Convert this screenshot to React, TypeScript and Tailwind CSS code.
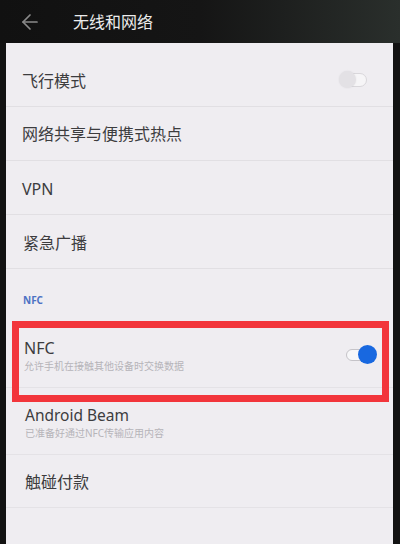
import React from "react";
import { ArrowLeft } from "lucide-react";

const font = { fontFamily: '"Noto Sans", "Noto Sans CJK SC", sans-serif' };

function ToggleOff() {
  return (
    <div className="relative w-[30px] h-[20px] flex items-center">
      <div className="absolute left-[6px] w-[22px] h-[14px] rounded-full border border-[#d9d7db] bg-[#f6f5f7]" />
      <div className="absolute left-0 w-[17px] h-[17px] rounded-full bg-[#e3e1e5] shadow-[0_0_2px_rgba(0,0,0,0.08)]" />
    </div>
  );
}

function ToggleOn() {
  return (
    <div className="relative w-[31px] h-[20px] flex items-center">
      <div className="absolute left-0 top-[5px] w-[26px] h-[12px] rounded-full border-[1.5px] border-[#c5c3c8] bg-[#f7f7f9]" />
      <div className="absolute right-0 w-[19px] h-[19px] rounded-full bg-[#1868e0]" />
    </div>
  );
}

export default function App() {
  return (
    <div className="w-[400px] h-[544px] overflow-hidden flex flex-col bg-[#121212] relative" style={font}>
      <div className="h-[43px] shrink-0 flex items-center bg-linear-to-r from-[#111111] via-[#151515] to-[#2a2f2c]">
        <div className="w-[73px] pl-[18px] flex items-center">
          <ArrowLeft size={24} strokeWidth={1.7} color="#8a8a8a" />
        </div>
        <span className="text-[16px] text-[#ececec] leading-none">无线和网络</span>
      </div>
      <div className="flex-1 ml-[6px] mr-[7px] bg-[#efedf1] pt-[10px] text-[#3c3c3e]">
        <div className="h-[54px] flex items-center justify-between pl-[16px] pr-[24px] border-b border-[#e1dfe3]">
          <span className="text-[16px] mt-[2px]">飞行模式</span>
          <ToggleOff />
        </div>
        <div className="h-[54px] flex items-center pl-[16px] border-b border-[#e1dfe3]">
          <span className="text-[16px]">网络共享与便携式热点</span>
        </div>
        <div className="h-[54px] flex items-center pl-[16px] border-b border-[#e1dfe3]">
          <span className="text-[16px] mt-[2px]">VPN</span>
        </div>
        <div className="h-[54px] flex items-center pl-[17px] border-b border-[#e1dfe3]">
          <span className="text-[16px] mt-[2px]">紧急广播</span>
        </div>
        <div className="h-[52px] pl-[17px] pt-[25px]">
          <span className="text-[10px] font-bold text-[#4d72c4] leading-[12px] block">NFC</span>
        </div>
        <div className="h-[67px] flex items-center justify-between pl-[18px] pr-[16px] border-b border-[#e4e2e6]">
          <div className="flex flex-col mt-[4px]">
            <span className="text-[16px] leading-[20px]">NFC</span>
            <span className="text-[10px] leading-[16px] text-[#b6b4b9]">允许手机在接触其他设备时交换数据</span>
          </div>
          <ToggleOn />
        </div>
        <div className="h-[67px] flex items-center pl-[19px] border-b border-[#e4e2e6]">
          <div className="flex flex-col mt-[4px]">
            <span className="text-[15.5px] leading-[20px]">Android Beam</span>
            <span className="text-[10px] leading-[16px] text-[#b6b4b9]">已准备好通过NFC传输应用内容</span>
          </div>
        </div>
        <div className="h-[53px] flex items-center pl-[19px] border-b border-[#e4e2e6]">
          <span className="text-[16px] mt-[2px]">触碰付款</span>
        </div>
      </div>
      <div className="absolute left-[12px] top-[321px] w-[377px] h-[81px] border-[7px] border-[#f2353b]" />
    </div>
  );
}
